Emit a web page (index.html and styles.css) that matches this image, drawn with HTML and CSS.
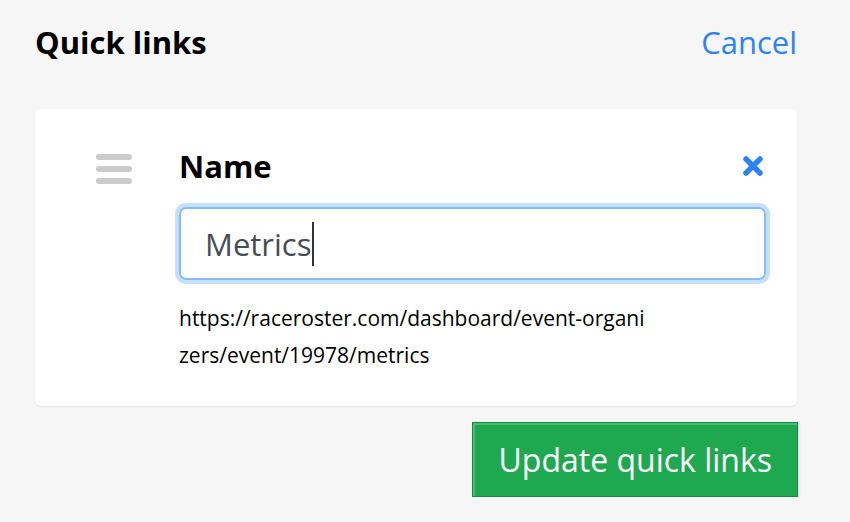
FILE: index.html
```html
<!DOCTYPE html>
<html lang="en">
<head>
<meta charset="utf-8">
<title>Quick links</title>
<link rel="stylesheet" href="styles.css">
</head>
<body>
<div class="page">
  <header class="header">
    <h1 class="title">Quick links</h1>
    <a class="cancel" href="#">Cancel</a>
  </header>
  <section class="card">
    <div class="handle" aria-hidden="true">
      <span class="bar"></span>
      <span class="bar"></span>
      <span class="bar"></span>
    </div>
    <div class="fields">
      <div class="label-row">
        <label class="label">Name</label>
        <svg class="remove" width="22" height="22" viewBox="0 0 22 22" aria-label="Remove">
          <path d="M4 4 L18 18 M18 4 L4 18" stroke="#2d83f6" stroke-width="5.5" stroke-linecap="round"/>
        </svg>
      </div>
      <div class="input"><span class="value">Metrics</span><span class="caret"></span></div>
      <p class="url">https://raceroster.com/dashboard/event-organizers/event/19978/metrics</p>
    </div>
  </section>
  <div class="actions">
    <button class="btn-update">Update quick links</button>
  </div>
</div>
</body>
</html>
```
FILE: styles.css
```css
html, body {
  margin: 0;
  padding: 0;
  background: #f6f6f6;
}
body {
  font-family: "Open Sans", "Noto Sans", sans-serif;
  color: #000;
}
.page {
  width: 762px;
  margin-left: 35px;
}
.header {
  display: flex;
  justify-content: space-between;
  align-items: baseline;
  padding-top: 21px;
}
.title {
  margin: 0;
  font-size: 31px;
  font-weight: 700;
  line-height: normal;
}
.cancel {
  font-size: 31px;
  color: #2d83f6;
  text-decoration: none;
}
.card {
  margin-top: 46px;
  background: #fff;
  border-radius: 6px;
  box-shadow: 0 1px 2px rgba(0,0,0,0.08);
  display: flex;
  padding: 36px 31px 32px 61px;
}
.handle {
  width: 36px;
  display: flex;
  flex-direction: column;
  gap: 6px;
  padding-top: 9px;
  margin-right: 47px;
  flex: none;
}
.bar {
  display: block;
  height: 6px;
  border-radius: 3px;
  background: #cbcbcb;
}
.fields {
  flex: 1;
  min-width: 0;
}
.label-row {
  display: flex;
  justify-content: space-between;
  align-items: center;
}
.label {
  font-size: 31px;
  font-weight: 700;
  line-height: normal;
}
.remove {
  margin-right: 2px;
}
.input {
  margin-top: 20px;
  height: 73px;
  box-sizing: border-box;
  border: 2px solid #86bbf9;
  border-radius: 7px;
  box-shadow: 0 0 0 4px #c5e0fd;
  display: flex;
  align-items: center;
  padding-left: 24px;
  font-size: 31px;
  color: #464c55;
}
.caret {
  display: inline-block;
  width: 2px;
  height: 44px;
  background: #333;
  margin-left: 1px;
}
.url {
  margin: 20px 0 0;
  width: 471px;
  font-size: 21px;
  line-height: 37px;
  word-break: break-all;
}
.actions {
  display: flex;
  justify-content: flex-end;
  margin-top: 16px;
  margin-right: -1px;
}
.btn-update {
  font-family: "Open Sans", "Noto Sans", sans-serif;
  font-size: 32px;
  color: #fff;
  background: #1ea84f;
  border: 1px solid #188a3f;
  box-shadow: inset 2px 2px 0 #4bbb70, 1px 1px 3px rgba(0,0,0,0.12);
  height: 75px;
  padding: 0 25px;
  border-radius: 0;
}
```
